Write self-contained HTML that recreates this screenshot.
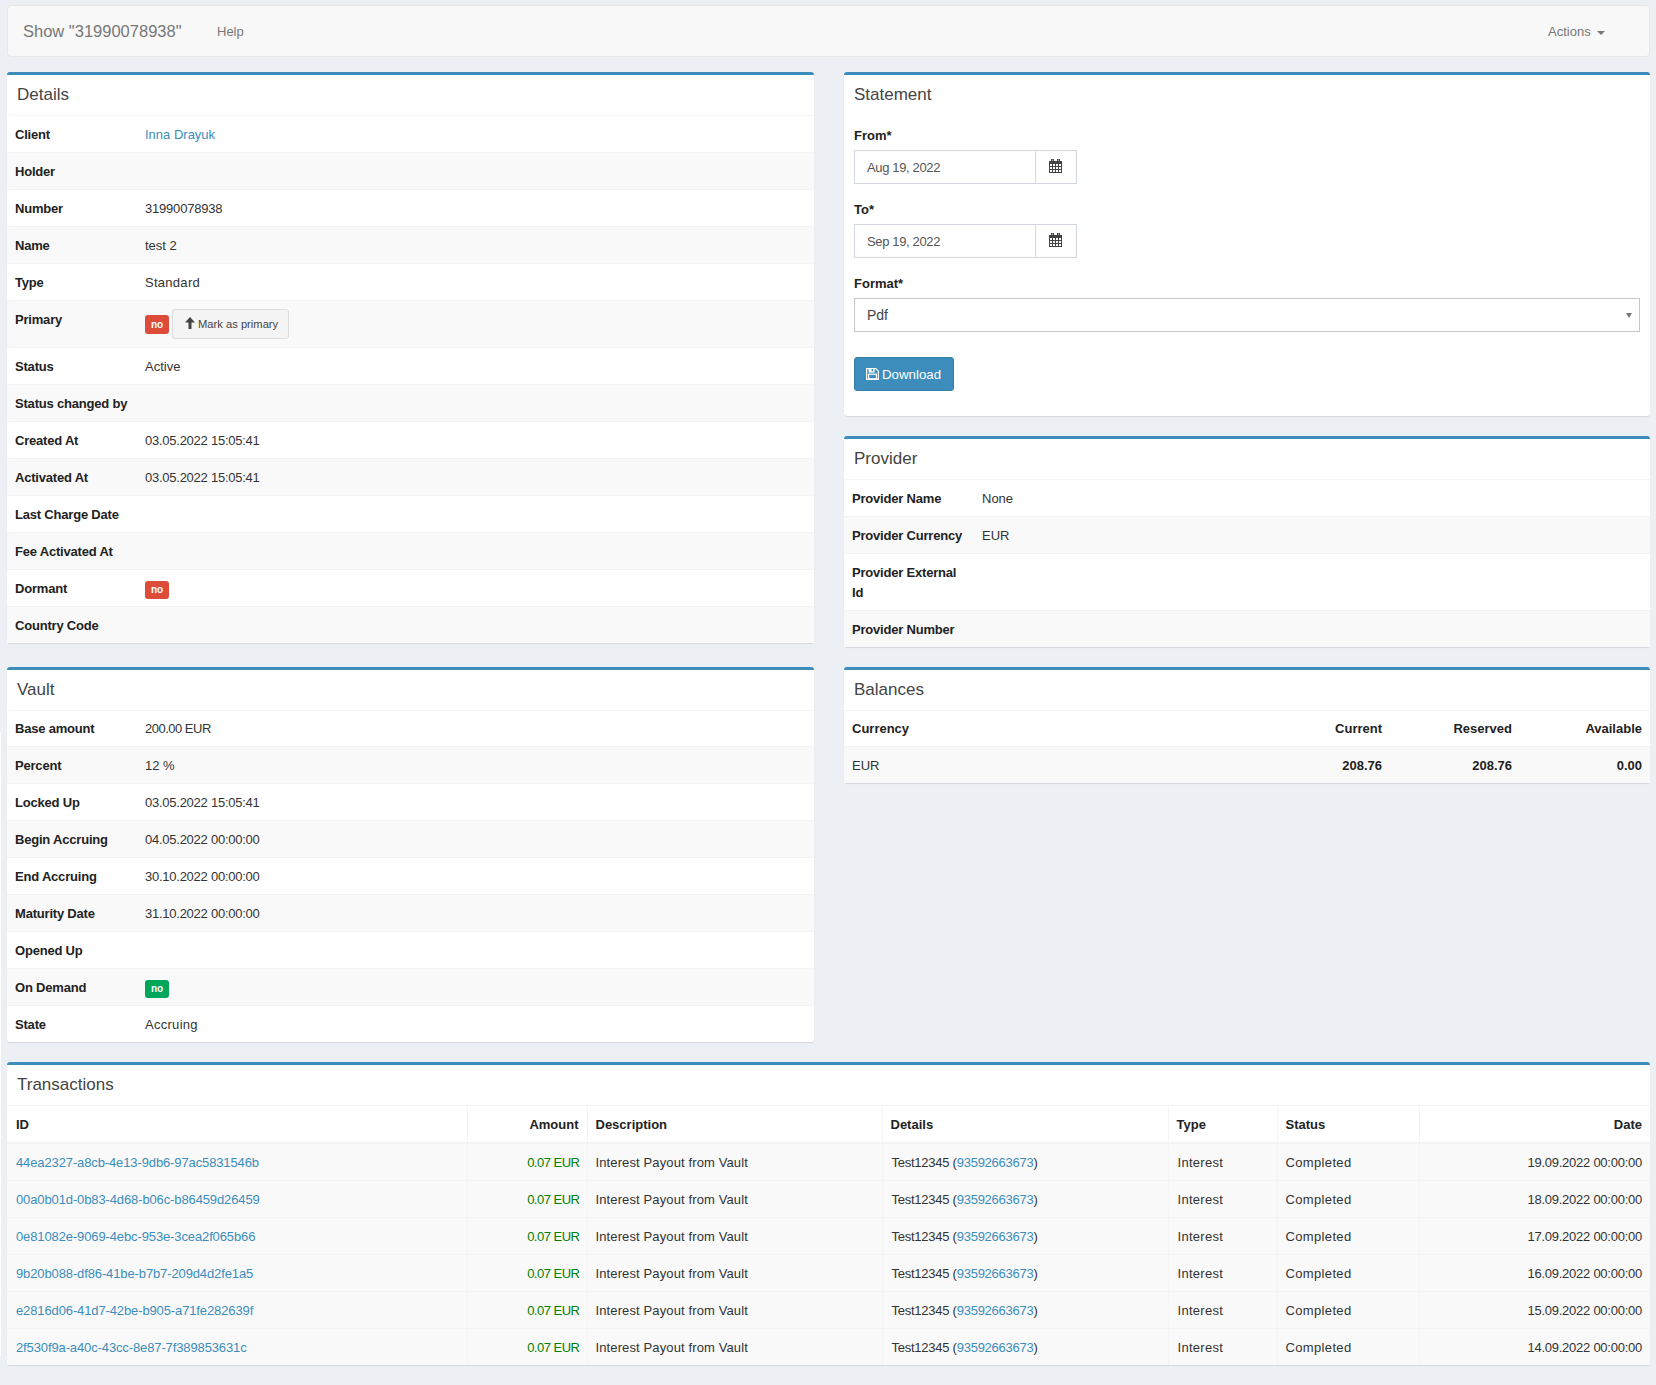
<!DOCTYPE html>
<html><head><meta charset="utf-8">
<style>
*{box-sizing:border-box;margin:0;padding:0}
html,body{width:1656px;height:1385px;overflow:hidden}
body{background:#ecf0f5;font-family:"Liberation Sans",sans-serif;font-size:13px;color:#333;position:relative}
a{color:#3c8dbc;text-decoration:none}
.strip{position:absolute;left:0;top:732px;width:1px;height:624px;background:#fff}
.nav{position:absolute;left:7px;top:5px;width:1643px;height:52px;background:#f8f8f8;border:1px solid #e7e7e7;border-radius:4px}
.nav .brand{position:absolute;left:15px;top:15px;font-size:16.5px;line-height:20px;color:#777}
.nav .help{position:absolute;left:209px;top:16px;font-size:13px;line-height:20px;color:#777}
.nav .actions{position:absolute;left:1540px;top:16px;font-size:13px;line-height:20px;color:#777}
.caret{display:inline-block;width:0;height:0;border-top:4px solid #777;border-left:4px solid transparent;border-right:4px solid transparent;vertical-align:middle;margin-left:6px;position:relative;top:0px}
.box{position:absolute;background:#fff;border-top:3px solid #3c8dbc;border-radius:3px;box-shadow:0 1px 1px rgba(0,0,0,0.1)}
.bh{height:41px;padding:11px 10px 0 10px;font-size:17px;line-height:17px;color:#444;border-bottom:1px solid #f4f4f4}
table{border-collapse:collapse;width:100%;table-layout:fixed}
td,th{padding:9px 8px 7px;line-height:20px;border-top:1px solid #f4f4f4;vertical-align:top;text-align:left}
tr:first-child td,tr:first-child th{border-top:0}
.dt td.l{width:130px;font-weight:bold}
.dt tr:nth-child(even){background:#f9f9f9}
.label{position:absolute;left:0;width:24px;height:18px;font-size:10px;font-weight:bold;line-height:18px;text-align:center;color:#fff;border-radius:3px}
.cell{position:relative;height:20px}
.red{background:#dd4b39}
.green{background:#00a65a}

.btnx{position:absolute;left:27px;top:-1px;height:30px;width:117px;background:#f4f4f4;border:1px solid #ddd;border-radius:3px;color:#444;font-size:11.2px;line-height:28px;padding-left:25px}
.btnx svg{position:absolute;left:12px;top:7px}
.flabel{position:absolute;left:10px;font-weight:bold;font-size:13px;line-height:20px}
.inp{position:absolute;left:10px;width:223px;height:34px;border:1px solid #d2d6de;background:#fff}
.inp .v{position:absolute;left:12px;top:7px;line-height:20px;color:#555;font-size:13px;letter-spacing:-0.36px}
.inp .add{position:absolute;right:-1px;top:-1px;width:42px;height:34px;border:1px solid #d2d6de}
.inp .add svg{position:absolute;left:13px;top:8px}
.sel{position:absolute;left:10px;width:786px;height:34px;border:1px solid #c6c6c6;background:#fff}
.sel .v{position:absolute;left:12px;top:7px;line-height:18px;color:#444;font-size:14px}
.sel .arr{position:absolute;right:7px;top:14px;width:0;height:0;border-top:5px solid #777;border-left:3.5px solid transparent;border-right:3.5px solid transparent}
.dl{position:absolute;left:10px;top:282px;width:100px;height:34px;background:#3c8dbc;border:1px solid #367fa9;border-radius:3px;color:#fff;font-size:13.3px;line-height:34px;padding-left:27px}
.dl svg{position:absolute;left:11px;top:10px}
.pt td.l{width:130px;font-weight:bold}
.pt tr:nth-child(even){background:#f9f9f9}
.bt th{font-weight:bold}
.bt .r{text-align:right;width:130px}
.bt tr:nth-child(even){background:#f9f9f9}
.tt{table-layout:fixed}
.tt td,.tt th{border:1px solid #f4f4f4;white-space:nowrap;overflow:hidden}
.tt tr:first-child th{border-top:0;border-bottom:2px solid #f4f4f4}
.tt tbody tr{background:#f9f9f9}
.tt tbody tr:last-child td{border-bottom:0}
.tt td:first-child,.tt th:first-child{border-left:0;padding-left:9px}
.tt td:first-child a{letter-spacing:-0.12px}
.tt td:last-child,.tt th:last-child{border-right:0}
.tt .r{text-align:right}
.tt .desc{letter-spacing:0.12px}
.tt .amt{letter-spacing:-0.5px;padding-right:7px}
.tt .typ{letter-spacing:0.28px;padding-left:9px}
.tt .sts{letter-spacing:0.35px}
.tt .det{letter-spacing:-0.25px;padding-left:9px}
.grn{color:#008000}
td.l{white-space:nowrap;color:#222;letter-spacing:-0.2px}
.d{letter-spacing:-0.25px}
th,b,.flabel{color:#222}
.f35 td,.f35 th{height:35px;padding-top:8px}
</style></head><body>
<div class="strip"></div>
<div class="nav">
  <div class="brand">Show "31990078938"</div>
  <div class="help">Help</div>
  <div class="actions">Actions<span class="caret"></span></div>
</div>

<div class="box" style="left:7px;top:72px;width:807px;height:571px">
  <div class="bh">Details</div>
  <table class="dt">
    <tr><td class="l">Client</td><td><a>Inna Drayuk</a></td></tr>
    <tr><td class="l">Holder</td><td></td></tr>
    <tr><td class="l">Number</td><td style="letter-spacing:-0.2px">31990078938</td></tr>
    <tr><td class="l">Name</td><td>test 2</td></tr>
    <tr><td class="l">Type</td><td style="letter-spacing:0.28px">Standard</td></tr>
    <tr><td class="l">Primary</td><td style="height:47px"><div class="cell"><span class="label red" style="top:5px;height:19px;line-height:19px">no</span><span class="btnx"><svg width="10" height="12" viewBox="0 0 10 12"><path fill="#444" d="M5 0L10 5.5H6.5V12h-3V5.5H0z"/></svg>Mark as primary</span></div></td></tr>
    <tr><td class="l">Status</td><td>Active</td></tr>
    <tr><td class="l">Status changed by</td><td></td></tr>
    <tr><td class="l">Created At</td><td><span class="d">03.05.2022 15:05:41</span></td></tr>
    <tr><td class="l">Activated At</td><td><span class="d">03.05.2022 15:05:41</span></td></tr>
    <tr><td class="l">Last Charge Date</td><td></td></tr>
    <tr><td class="l">Fee Activated At</td><td></td></tr>
    <tr><td class="l">Dormant</td><td><div class="cell"><span class="label red" style="top:2px">no</span></div></td></tr>
    <tr><td class="l">Country Code</td><td></td></tr>
  </table>
</div>

<div class="box" style="left:844px;top:72px;width:806px;height:344px">
  <div class="bh" style="border-bottom:0">Statement</div>
  <div class="flabel" style="top:51px">From*</div>
  <div class="inp" style="top:75px"><span class="v">Aug 19, 2022</span><span class="add"><svg width="13" height="14" viewBox="0 0 13 14"><path fill="#444" d="M2 0h3v3H2zM8 0h3v3H8z"/><rect x="3" y="0.5" width="1" height="2" fill="#bbb"/><rect x="9" y="0.5" width="1" height="2" fill="#bbb"/><rect x="0" y="2" width="13" height="12" fill="#444"/><g fill="#fff"><rect x="1" y="5" width="2" height="2"/><rect x="4" y="5" width="2" height="2"/><rect x="7" y="5" width="2" height="2"/><rect x="10" y="5" width="2" height="2"/><rect x="1" y="8" width="2" height="2"/><rect x="4" y="8" width="2" height="2"/><rect x="7" y="8" width="2" height="2"/><rect x="10" y="8" width="2" height="2"/><rect x="1" y="11" width="2" height="2"/><rect x="4" y="11" width="2" height="2"/><rect x="7" y="11" width="2" height="2"/><rect x="10" y="11" width="2" height="2"/></g></svg></span></div>
  <div class="flabel" style="top:125px">To*</div>
  <div class="inp" style="top:149px"><span class="v">Sep 19, 2022</span><span class="add"><svg width="13" height="14" viewBox="0 0 13 14"><path fill="#444" d="M2 0h3v3H2zM8 0h3v3H8z"/><rect x="3" y="0.5" width="1" height="2" fill="#bbb"/><rect x="9" y="0.5" width="1" height="2" fill="#bbb"/><rect x="0" y="2" width="13" height="12" fill="#444"/><g fill="#fff"><rect x="1" y="5" width="2" height="2"/><rect x="4" y="5" width="2" height="2"/><rect x="7" y="5" width="2" height="2"/><rect x="10" y="5" width="2" height="2"/><rect x="1" y="8" width="2" height="2"/><rect x="4" y="8" width="2" height="2"/><rect x="7" y="8" width="2" height="2"/><rect x="10" y="8" width="2" height="2"/><rect x="1" y="11" width="2" height="2"/><rect x="4" y="11" width="2" height="2"/><rect x="7" y="11" width="2" height="2"/><rect x="10" y="11" width="2" height="2"/></g></svg></span></div>
  <div class="flabel" style="top:199px">Format*</div>
  <div class="sel" style="top:223px"><span class="v">Pdf</span><span class="arr"></span></div>
  <div class="dl"><svg width="13" height="12" viewBox="0 0 13 12"><path d="M0.6 0.6H9.8L12.4 3.2V11.4H0.6Z" fill="none" stroke="#fff" stroke-width="1.2"/><rect x="2.6" y="1" width="6" height="3.6" fill="#fff"/><rect x="5.6" y="1" width="1.6" height="2.4" fill="#3c8dbc"/><rect x="2.6" y="6.2" width="7.8" height="4.6" fill="none" stroke="#fff" stroke-width="1.2"/></svg>Download</div>
</div>

<div class="box" style="left:844px;top:436px;width:806px;height:211px">
  <div class="bh">Provider</div>
  <table class="dt">
    <tr><td class="l">Provider Name</td><td>None</td></tr>
    <tr><td class="l">Provider Currency</td><td>EUR</td></tr>
    <tr><td class="l" style="height:57px">Provider External<br>Id</td><td></td></tr>
    <tr><td class="l">Provider Number</td><td></td></tr>
  </table>
</div>

<div class="box" style="left:7px;top:667px;width:807px;height:375px">
  <div class="bh">Vault</div>
  <table class="dt">
    <tr class="f35"><td class="l">Base amount</td><td style="letter-spacing:-0.5px">200.00 EUR</td></tr>
    <tr><td class="l">Percent</td><td>12 %</td></tr>
    <tr><td class="l">Locked Up</td><td><span class="d">03.05.2022 15:05:41</span></td></tr>
    <tr><td class="l">Begin Accruing</td><td><span class="d">04.05.2022 00:00:00</span></td></tr>
    <tr><td class="l">End Accruing</td><td><span class="d">30.10.2022 00:00:00</span></td></tr>
    <tr><td class="l">Maturity Date</td><td><span class="d">31.10.2022 00:00:00</span></td></tr>
    <tr><td class="l">Opened Up</td><td></td></tr>
    <tr><td class="l">On Demand</td><td><div class="cell"><span class="label green" style="top:2px">no</span></div></td></tr>
    <tr><td class="l">State</td><td style="letter-spacing:0.28px">Accruing</td></tr>
  </table>
</div>

<div class="box" style="left:844px;top:667px;width:806px;height:116px">
  <div class="bh">Balances</div>
  <table class="dt bt">
    <tr class="f35"><th>Currency</th><th class="r">Current</th><th class="r">Reserved</th><th class="r">Available</th></tr>
    <tr><td>EUR</td><td class="r"><b>208.76</b></td><td class="r"><b>208.76</b></td><td class="r"><b>0.00</b></td></tr>
  </table>
</div>

<div class="box" style="left:7px;top:1062px;width:1643px;height:303px">
  <div class="bh">Transactions</div>
  <table class="tt">
    <colgroup><col style="width:460px"><col style="width:120px"><col style="width:295px"><col style="width:286px"><col style="width:109px"><col style="width:142px"><col style="width:231px"></colgroup>
    <thead><tr><th>ID</th><th class="r">Amount</th><th>Description</th><th>Details</th><th>Type</th><th>Status</th><th class="r">Date</th></tr></thead>
    <tbody>
<tr><td><a>44ea2327-a8cb-4e13-9db6-97ac5831546b</a></td><td class="r grn amt">0.07 EUR</td><td class="desc">Interest Payout from Vault</td><td class="det">Test12345 (<a>93592663673</a>)</td><td class="typ">Interest</td><td class="sts">Completed</td><td class="r"><span class="d">19.09.2022 00:00:00</span></td></tr>
<tr><td><a>00a0b01d-0b83-4d68-b06c-b86459d26459</a></td><td class="r grn amt">0.07 EUR</td><td class="desc">Interest Payout from Vault</td><td class="det">Test12345 (<a>93592663673</a>)</td><td class="typ">Interest</td><td class="sts">Completed</td><td class="r"><span class="d">18.09.2022 00:00:00</span></td></tr>
<tr><td><a>0e81082e-9069-4ebc-953e-3cea2f065b66</a></td><td class="r grn amt">0.07 EUR</td><td class="desc">Interest Payout from Vault</td><td class="det">Test12345 (<a>93592663673</a>)</td><td class="typ">Interest</td><td class="sts">Completed</td><td class="r"><span class="d">17.09.2022 00:00:00</span></td></tr>
<tr><td><a>9b20b088-df86-41be-b7b7-209d4d2fe1a5</a></td><td class="r grn amt">0.07 EUR</td><td class="desc">Interest Payout from Vault</td><td class="det">Test12345 (<a>93592663673</a>)</td><td class="typ">Interest</td><td class="sts">Completed</td><td class="r"><span class="d">16.09.2022 00:00:00</span></td></tr>
<tr><td><a>e2816d06-41d7-42be-b905-a71fe282639f</a></td><td class="r grn amt">0.07 EUR</td><td class="desc">Interest Payout from Vault</td><td class="det">Test12345 (<a>93592663673</a>)</td><td class="typ">Interest</td><td class="sts">Completed</td><td class="r"><span class="d">15.09.2022 00:00:00</span></td></tr>
<tr><td><a>2f530f9a-a40c-43cc-8e87-7f389853631c</a></td><td class="r grn amt">0.07 EUR</td><td class="desc">Interest Payout from Vault</td><td class="det">Test12345 (<a>93592663673</a>)</td><td class="typ">Interest</td><td class="sts">Completed</td><td class="r"><span class="d">14.09.2022 00:00:00</span></td></tr>
    </tbody>
  </table>
</div>
</body></html>
